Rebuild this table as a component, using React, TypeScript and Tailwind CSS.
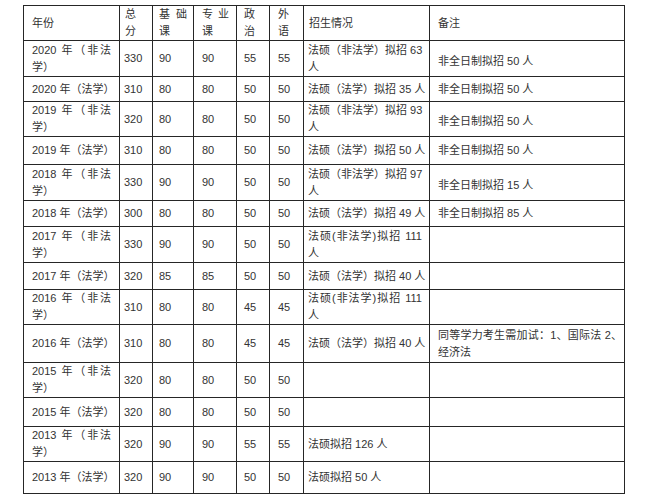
import React from "react";

type Row = {
  h: number;
  year: string[];
  total: string;
  base: string;
  major: string;
  pol: string;
  lang: string;
  plan: string[];
  note: string[];
};

const rows: Row[] = [
  { h: 36, year: ["2020 年（非法", "学）"], total: "330", base: "90", major: "90", pol: "55", lang: "55", plan: ["法硕（非法学）拟招 63", "人"], note: ["非全日制拟招 50 人"] },
  { h: 25, year: ["2020 年（法学）"], total: "310", base: "80", major: "80", pol: "50", lang: "50", plan: ["法硕（法学）拟招 35 人"], note: ["非全日制拟招 50 人"] },
  { h: 35, year: ["2019 年（非法", "学）"], total: "320", base: "80", major: "80", pol: "50", lang: "50", plan: ["法硕（非法学）拟招 93", "人"], note: ["非全日制拟招 50 人"] },
  { h: 28, year: ["2019 年（法学）"], total: "310", base: "80", major: "80", pol: "50", lang: "50", plan: ["法硕（法学）拟招 50 人"], note: ["非全日制拟招 50 人"] },
  { h: 36, year: ["2018 年（非法", "学）"], total: "330", base: "90", major: "90", pol: "50", lang: "50", plan: ["法硕（非法学）拟招 97", "人"], note: ["非全日制拟招 15 人"] },
  { h: 26, year: ["2018 年（法学）"], total: "300", base: "80", major: "80", pol: "50", lang: "50", plan: ["法硕（法学）拟招 49 人"], note: ["非全日制拟招 85 人"] },
  { h: 36, year: ["2017 年（非法", "学）"], total: "330", base: "90", major: "90", pol: "50", lang: "50", plan: ["法硕(非法学)拟招 111", "人"], note: [] },
  { h: 27, year: ["2017 年（法学）"], total: "320", base: "85", major: "85", pol: "50", lang: "50", plan: ["法硕（法学）拟招 40 人"], note: [] },
  { h: 35, year: ["2016 年（非法", "学）"], total: "310", base: "80", major: "80", pol: "45", lang: "45", plan: ["法硕(非法学)拟招 111", "人"], note: [] },
  { h: 38, year: ["2016 年（法学）"], total: "310", base: "80", major: "80", pol: "45", lang: "45", plan: ["法硕（法学）拟招 40 人"], note: ["同等学力考生需加试：1、国际法 2、", "经济法"] },
  { h: 35, year: ["2015 年（非法", "学）"], total: "320", base: "80", major: "80", pol: "50", lang: "50", plan: [], note: [] },
  { h: 29, year: ["2015 年（法学）"], total: "320", base: "80", major: "80", pol: "50", lang: "50", plan: [], note: [] },
  { h: 35, year: ["2013 年（非法", "学）"], total: "320", base: "90", major: "90", pol: "55", lang: "55", plan: ["法硕拟招 126 人"], note: [] },
  { h: 32, year: ["2013 年（法学）"], total: "320", base: "90", major: "90", pol: "50", lang: "50", plan: ["法硕拟招 50 人"], note: [] },
];

function Lines({ lines }: { lines: string[] }) {
  if (lines.length === 0) return null;
  if (lines.length === 1) return <div className="whitespace-nowrap">{lines[0]}</div>;
  return (
    <>
      <div className="whitespace-nowrap text-justify [text-align-last:justify]">{lines[0]}</div>
      <div className="whitespace-nowrap">{lines[1]}</div>
    </>
  );
}

const td = "border border-[#262626] align-middle p-0";

export default function App() {
  return (
    <div className="bg-white w-[648px] h-[500px] pt-[5px] pl-[23px] text-[#333] text-[11px] leading-[17px] font-['Liberation_Sans','Noto_Sans_CJK_SC',sans-serif]">
      <table className="table-fixed border-collapse w-[601px]">
        <colgroup>
          <col className="w-[96px]" />
          <col className="w-[33px]" />
          <col className="w-[41px]" />
          <col className="w-[43px]" />
          <col className="w-[33px]" />
          <col className="w-[34px]" />
          <col className="w-[126px]" />
          <col className="w-[195px]" />
        </colgroup>
        <tbody>
          <tr className="h-[35px]">
            <td className={`${td} pl-[8px] pr-[8px]`}><Lines lines={["年份"]} /></td>
            <td className={`${td} pl-[5px] pr-[4px]`}><Lines lines={["总", "分"]} /></td>
            <td className={`${td} pl-[6px] pr-[6px]`}><Lines lines={["基础", "课"]} /></td>
            <td className={`${td} pl-[8px] pr-[7px]`}><Lines lines={["专业", "课"]} /></td>
            <td className={`${td} pl-[7px] pr-[4px]`}><Lines lines={["政", "治"]} /></td>
            <td className={`${td} pl-[8px] pr-[4px]`}><Lines lines={["外", "语"]} /></td>
            <td className={`${td} pl-[5px] pr-[8px]`}><Lines lines={["招生情况"]} /></td>
            <td className={`${td} pl-[8px] pr-[2px]`}><Lines lines={["备注"]} /></td>
          </tr>
          {rows.map((r, i) => (
            <tr key={i} style={{ height: r.h }}>
              <td className={`${td} pl-[8px] pr-[8px]`}><Lines lines={r.year} /></td>
              <td className={`${td} pl-[4px] pr-[2px]`}>{r.total}</td>
              <td className={`${td} pl-[6px] pr-[2px]`}>{r.base}</td>
              <td className={`${td} pl-[8px] pr-[2px]`}>{r.major}</td>
              <td className={`${td} pl-[7px] pr-[2px]`}>{r.pol}</td>
              <td className={`${td} pl-[8px] pr-[2px]`}>{r.lang}</td>
              <td className={`${td} pl-[4px] pr-[7px]`}><Lines lines={r.plan} /></td>
              <td className={`${td} pl-[8px] pr-[2px] ${r.year.length > 1 && r.note.length === 1 ? "pt-[5px]" : ""}`}><Lines lines={r.note} /></td>
            </tr>
          ))}
        </tbody>
      </table>
    </div>
  );
}
